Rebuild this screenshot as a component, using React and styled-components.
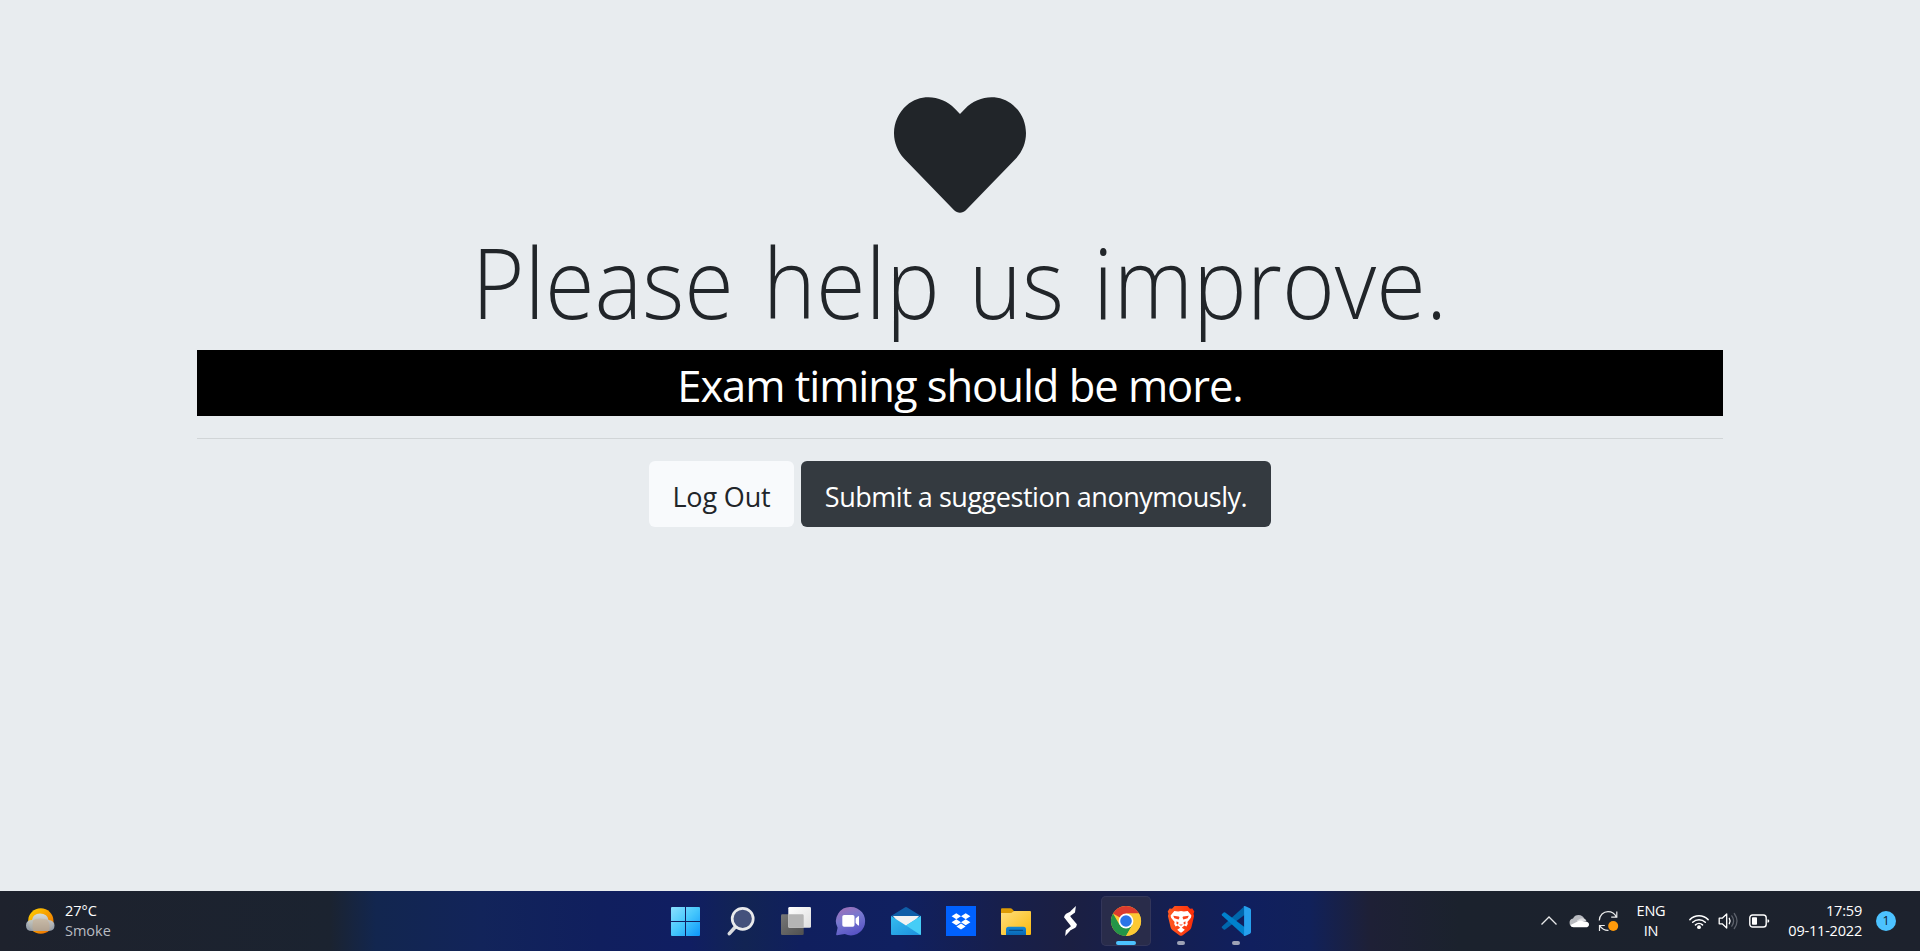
import React from 'react';
import styled, { createGlobalStyle } from 'styled-components';
import { FaHeart } from 'react-icons/fa';

const GlobalStyle = createGlobalStyle`
  *, *::before, *::after { box-sizing: border-box; }
  body {
    margin: 0;
    background: #e8ecef;
    color: #212529;
    font-family: 'Open Sans', 'Noto Sans', sans-serif;
    overflow: hidden;
  }
`;

const Screen = styled.div`
  height: 951px;
  display: flex;
  flex-direction: column;
`;

const Page = styled.main`
  flex: 1;
  min-height: 0;
  padding: 89px 197px 0;
  display: flex;
  flex-direction: column;
  align-items: center;
`;

const Heart = styled(FaHeart)`
  width: 132px;
  height: 132px;
  flex: none;
`;

const Title = styled.h1`
  margin: 7px 0 0;
  height: 122px;
  font-size: 97px;
  line-height: 107px;
  font-weight: 300;
  white-space: nowrap;
  word-spacing: 6px;
  transform: scaleX(0.93);
`;

const Banner = styled.p`
  margin: 0;
  width: 100%;
  height: 66px;
  background: #000;
  color: #fff;
  text-align: center;
  font-size: 43.5px;
  line-height: 71px;
  letter-spacing: -1.04px;
`;

const Rule = styled.hr`
  width: 100%;
  height: 1px;
  margin: 22px 0;
  border: 0;
  background: #d1d5d7;
`;

const Actions = styled.div`
  display: flex;
  gap: 7px;
`;

const Button = styled.button`
  width: ${(p) => p.$width};
  height: 66px;
  padding: 4px 0 0;
  border: 0;
  border-radius: 6px;
  background: ${(p) => (p.$dark ? '#343a40' : '#f8fafc')};
  color: ${(p) => (p.$dark ? '#fff' : '#212529')};
  font-family: inherit;
  font-size: 27px;
  letter-spacing: ${(p) => p.$spacing};
  white-space: nowrap;
`;

const Taskbar = styled.footer`
  height: 60px;
  flex: none;
  display: grid;
  grid-template-columns: 661px 600px 659px;
  align-items: center;
  color: #fff;
  background: linear-gradient(
    90deg,
    #1e222d 0, #1b2330 330px, #12264f 376px, #12245a 480px, #101f5e 600px,
    #101e62 690px, #122453 745px, #101f5e 800px, #102060 900px, #171f4c 1000px,
    #1b1f42 1070px, #131f55 1190px, #101f5e 1250px, #11215a 1310px, #1e2036 1370px, #1b222d 1460px, #1d222d 1920px
  );
`;

const Weather = styled.div`
  display: flex;
  align-items: center;
  gap: 9px;
  padding-left: 25px;
`;

const Lines = styled.div`
  display: flex;
  flex-direction: column;
  text-align: ${(p) => p.$align || 'left'};
  font-size: 14.5px;
  line-height: 20px;
  letter-spacing: ${(p) => (p.$align ? '-0.2px' : '0')};
  white-space: nowrap;
`;

const Muted = styled.span`
  color: #b9bcc2;
`;

const Apps = styled.nav`
  display: flex;
  gap: 5px;
`;

const AppTile = styled.div`
  width: 50px;
  height: 50px;
  border-radius: 5px;
  background: ${(p) => (p.$active ? '#292c4a' : 'transparent')};
  box-shadow: ${(p) => (p.$active ? 'inset 0 0 0 1px #33365a' : 'none')};
  svg { display: block; }
`;

const Tray = styled.div`
  display: flex;
  align-items: center;
  justify-content: flex-end;
  padding-right: 24px;
  svg { display: block; flex: none; }
`;

const TraySlot = styled.div`
  width: ${(p) => p.$width}px;
  margin-right: ${(p) => p.$gap}px;
  flex: none;
`;

const Count = styled.div`
  width: 20px;
  height: 20px;
  border-radius: 50%;
  background: #4cc2ff;
  color: #10202c;
  display: grid;
  place-items: center;
  font-size: 12.5px;
  line-height: 20px;
`;

const Icon = ({ children }) => (
  <svg width="50" height="50" viewBox="0 0 50 50">{children}</svg>
);

const Stops = ({ id, from, to, x2 = 1, y2 = 1 }) => (
  <linearGradient id={id} x1="0" y1="0" x2={x2} y2={y2}>
    <stop stopColor={from} />
    <stop offset="1" stopColor={to} />
  </linearGradient>
);

const StartIcon = () => (
  <Icon>
    <defs>
      <linearGradient id="win" gradientUnits="userSpaceOnUse" x1="10" y1="11" x2="39" y2="40">
        <stop stopColor="#8be0ff" />
        <stop offset=".5" stopColor="#45c6fc" />
        <stop offset="1" stopColor="#0c96fb" />
      </linearGradient>
    </defs>
    <path fill="url(#win)" d="M11 11h13v14H10V12a1 1 0 0 1 1-1zM25 11h13a1 1 0 0 1 1 1v13H25zM10 26h14v14H11a1 1 0 0 1-1-1zM25 26h14v13a1 1 0 0 1-1 1H25z" />
  </Icon>
);

const SearchIcon = () => (
  <Icon>
    <path d="M19.3 31l-6 6.6" stroke="#d9dbde" strokeWidth="3.6" strokeLinecap="round" />
    <circle cx="26.7" cy="22.8" r="10.5" fill="#44517c" stroke="#e9eaec" strokeWidth="2.7" />
  </Icon>
);

const TaskViewIcon = () => (
  <Icon>
    <defs>
      <Stops id="tv1" from="#ffffff" to="#dedede" />
      <Stops id="tv2" from="#777777" to="#505050" />
    </defs>
    <rect x="10" y="18.3" width="22.7" height="20.7" rx="1.3" fill="url(#tv2)" />
    <rect x="17.3" y="11" width="22.7" height="20.7" rx="1.3" fill="url(#tv1)" />
    <path d="M17.3 18.3h14.1a1.3 1.3 0 0 1 1.3 1.3v12.1H18.6a1.3 1.3 0 0 1-1.3-1.3z" fill="#b5b5b5" />
  </Icon>
);

const ChatIcon = () => (
  <Icon>
    <defs>
      <linearGradient id="chat" x1=".2" y1="0" x2=".6" y2="1">
        <stop stopColor="#a070b8" />
        <stop offset=".45" stopColor="#7678d0" />
        <stop offset="1" stopColor="#5752c4" />
      </linearGradient>
    </defs>
    <path d="M25 11a14.2 14.2 0 1 1-6.2 27l-7.8 1.200a.8.8 0 0 1-.8-1l1.400-6.500A14.200 14.200 0 0 1 25 11z" fill="url(#chat)" />
    <rect x="16.3" y="19" width="12.2" height="11.8" rx="1.8" fill="#fff" />
    <path d="M29.600 22.600l2.500-2.300q.9-.6.9.5v8.100q0 1.100-.9.5l-2.500-2.300z" fill="#fff" />
  </Icon>
);

const MailIcon = () => (
  <Icon>
    <defs><Stops id="mail" from="#35bdf0" to="#1c8fdc" /></defs>
    <path d="M10 20l13.8-8.5q1.200-.8 2.400 0L40 20v5H10z" fill="#0f5ea8" />
    <path d="M12 20h26l-10 12H22z" fill="#f2f2f2" />
    <path d="M10 20l15 9.5L40 20v18a1 1 0 0 1-1 1H11a1 1 0 0 1-1-1z" fill="url(#mail)" />
    <path d="M25 29.500L40 20v18q0 .6-.5.9z" fill="#45cdf6" />
  </Icon>
);

const DropboxIcon = () => (
  <Icon>
    <rect x="10" y="10" width="30" height="30" fill="#0061fe" />
    <path fill="#fff" d="M20.3 17.3l4.7 3-4.7 3-4.7-3zM29.7 17.3l4.7 3-4.7 3-4.7-3zM20.3 23.3l4.7 3-4.7 3-4.7-3zM29.7 23.3l4.7 3-4.7 3-4.7-3zM25 27.5l4.6 3-4.6 3-4.6-3z" />
  </Icon>
);

const FolderIcon = () => (
  <Icon>
    <defs>
      <Stops id="fold" from="#ffdf7d" to="#fbb90e" />
      <Stops id="foldb" from="#1289d8" to="#0966b4" x2={0} />
    </defs>
    <path d="M10 13.200q0-1 1-1h8.500q.8 0 1.400.6l2.200 2.400V22H10z" fill="#dd9b05" />
    <path d="M10 17h9.400q.9 0 1.600-.6l1.200-1q.5-.4 1.200-.4H39q1 0 1 1v22q0 1-1 1H11q-1 0-1-1z" fill="url(#fold)" />
    <path d="M15 39v-5.700q0-2.600 2.600-2.600h14.800q2.600 0 2.600 2.600V39z" fill="url(#foldb)" />
    <path d="M18.5 34.3h13" stroke="#064a86" strokeWidth="1.3" strokeLinecap="round" />
  </Icon>
);

const BoltIcon = () => (
  <Icon>
    <path fill="#fff" d="M29.900 10l-.9 6.600-4.800 3.300q-.8-2.200.2-4.600zM24.600 15.500q-1.500 3.600.3 5.800l6 6.900q-.2 2-1.600 3.600l-5.200 2.600q1.800-2.800.4-4.800L18 21.300q.6-2.200 2.100-3.500zM25 30.200q.6 2.600-1.100 4.800L19.200 40l.6-5.800z" />
  </Icon>
);

const ChromeIcon = () => (
  <Icon>
    <circle cx="25" cy="25" r="15" fill="#fcc934" />
    <path d="M25 25L12 17.5A15 15 0 0 1 38 17.5H25z" fill="#dc3b2e" />
    <path d="M12 17.5A15 15 0 0 0 25 40l6.5-11.2L25 25l-6.5 3.8z" fill="#249548" />
    <path d="M38 17.5A15 15 0 0 1 25 40l6.5-11.2A7.5 7.5 0 0 0 25 17.5z" fill="#fcc934" />
    <circle cx="25" cy="25" r="7.4" fill="#fff" />
    <circle cx="25" cy="25" r="5.8" fill="#2a74e8" />
    <rect x="15" y="45" width="20" height="4" rx="2" fill="#4cc2ff" />
  </Icon>
);

const BraveIcon = () => (
  <Icon>
    <defs><Stops id="brave" from="#ff5a22" to="#fb2d09" y2={0} /></defs>
    <path fill="url(#brave)" d="M18.6 10h12.8l2.6 2.8 2.4-.3 1.9 3.1-.8 2.2.6 2.1-2.7 11.4q-.5 1.9-2 3l-6.7 4.9q-1.7 1.2-3.4 0l-6.7-4.9q-1.5-1.1-2-3l-2.7-11.400.6-2.100-.8-2.200 1.900-3.100 2.400.3z" />
    <path fill="#fff" d="M18.3 15l3.8.6 2.9-.6 2.9.6 3.8-.6 3.7 4.600-.5 2.200-3.500 4.100.4 2.100-1.400 2.400-2-.8-2.600 2.100 2.700 1.700q.4.3 0 .7l-2.600 2.100q-.9.7-1.800 0l-2.600-2.100q-.4-.4 0-.7l2.700-1.700-2.600-2.100-2 .8-1.400-2.400.4-2.100-3.500-4.100-.5-2.200z" />
    <path fill="#fb431b" d="M17.200 19.800l5.600.8q.8.3.6 1.100l-.8 1.800-4.200-1.300zM32.800 19.800l-5.600.8q-.8.3-.6 1.100l.8 1.800 4.200-1.300zM20.600 25.200l2 1.200-.6 2.200-1.600-.9zM29.400 25.200l-2 1.200.6 2.200 1.600-.9zM23 28.400h4l-2 1.300z" />
    <rect x="21" y="45" width="8" height="4" rx="2" fill="#9ea2b5" />
  </Icon>
);

const CodeIcon = () => (
  <Icon>
    <path d="M33.1 10.4L11 30.5q-.7.7 0 1.4l1.7 1.6q.7.6 1.5 0L38 15.5z" fill="#0067ad" />
    <path d="M14.2 16.5q-.8-.6-1.5 0L11 18.1q-.7.7 0 1.4l22.1 20.1L38 34.5z" fill="#0081cc" />
    <path d="M32.2 39.3q1 .9 2.3.5l4.4-2.1q1.1-.5 1.1-1.7V14q0-1.200-1.100-1.700l-4.400-2.100q-1.300-.5-2.300.4 .9-.4.9 1v26.800q0 1.300-.9.900z" fill="#26a0ee" />
    <rect x="21" y="45" width="8" height="4" rx="2" fill="#9ea2b5" />
  </Icon>
);

const apps = [
  StartIcon, SearchIcon, TaskViewIcon, ChatIcon, MailIcon, DropboxIcon,
  FolderIcon, BoltIcon, ChromeIcon, BraveIcon, CodeIcon,
];

const WeatherIcon = () => (
  <svg width="31" height="32" viewBox="0 0 31 32">
    <defs>
      <Stops id="sun" from="#ffd400" to="#ee6500" />
      <Stops id="cloud" from="#d5dfe6" to="#98a0aa" x2={0} />
    </defs>
    <circle cx="15.800" cy="16" r="12.700" fill="url(#sun)" />
    <path d="M7 26q-6 0-6-5.500t6-5.500q1-6.500 8-6.500 7.500 0 8.500 6.500 6 .500 6 5.500T24 26z" fill="url(#cloud)" opacity=".93" />
    <path d="M8 26q-1-5 0-10.500 1.500-2 7-2t7.500 1.500q3 4 1.500 11z" fill="#c9a982" opacity=".45" />
  </svg>
);

const ChevronIcon = () => (
  <svg width="18" height="20" viewBox="0 0 18 20"><path d="M1.500 13.500L9 6l7.500 7.500" fill="none" stroke="#e8e9ea" strokeWidth="1.300" /></svg>
);

const CloudIcon = () => (
  <svg width="20" height="20" viewBox="0 0 20 20">
    <path d="M4.500 16a4.300 4.300 0 0 1-.5-8.500 6.200 6.200 0 0 1 11.200.1L17 9z" fill="#b9bbc0" />
    <path d="M8 9.500l3-1.800q2.500-1.200 4.700.3L17.500 10 9 12z" fill="#dcdde0" />
    <path d="M1.500 14l8.700-4.200q2.300-.8 3.800.6h2.200q3.800.3 3.800 3t-3.400 2.900H4.500Q2 16.200 1.500 14z" fill="#fff" />
  </svg>
);

const SyncIcon = () => (
  <svg width="22" height="22" viewBox="0 0 22 22" fill="none" stroke="#eceded" strokeWidth="1.200">
    <path d="M1.300 10.500C1.500 5 5.500 1.600 10 1.600c3.800 0 6.800 2 8.300 5.300M18.800 1.500v5.700h-5.600M1.500 21v-5.500h5.300M1.800 15.800C4 19 6.500 20.500 10.500 20.300" />
    <circle cx="15.200" cy="16" r="5" fill="#ff9a0a" stroke="none" />
  </svg>
);

const WifiIcon = () => (
  <svg width="20" height="18" viewBox="0 0 20 18" fill="none" stroke="#fff" strokeWidth="1.500" strokeLinecap="round">
    <path d="M.9 7.600a12.900 12.900 0 0 1 18.200 0M3.700 10.200a9 9 0 0 1 12.600 0M6.500 12.900a5 5 0 0 1 7 0" />
    <circle cx="10" cy="15.200" r="1.900" fill="#fff" stroke="none" />
  </svg>
);

const SpeakerIcon = () => (
  <svg width="22" height="20" viewBox="0 0 22 20" fill="none" stroke="#fff" strokeWidth="1.300" strokeLinecap="round" strokeLinejoin="round">
    <path d="M1.200 7.200h3L8.700 3v14l-4.500-4.200h-3zM11.300 7.300q1.600 2.700 0 5.400" />
    <path d="M13.800 4.900q3.600 5.100 0 10.200M16.300 2.500q5.400 7.500 0 15" stroke="#5c616b" />
  </svg>
);

const BatteryIcon = () => (
  <svg width="21" height="16" viewBox="0 0 21 16">
    <rect x=".8" y="2" width="16.400" height="12" rx="2.800" fill="none" stroke="#fff" strokeWidth="1.400" />
    <rect x="3" y="4.200" width="5" height="7.600" rx=".8" fill="#fff" />
    <path d="M18.500 6.200q1.800.3 1.800 1.800t-1.800 1.800z" fill="#fff" />
  </svg>
);

export default function App() {
  return (
    <Screen>
      <GlobalStyle />
      <Page>
        <Heart />
        <Title>Please help us improve.</Title>
        <Banner>Exam timing should be more.</Banner>
        <Rule />
        <Actions>
          <Button $width="145px" $spacing="-0.15px">Log Out</Button>
          <Button $dark $width="470px" $spacing="-0.47px">Submit a suggestion anonymously.</Button>
        </Actions>
      </Page>
      <Taskbar>
        <Weather>
          <WeatherIcon />
          <Lines><span>27°C</span><Muted>Smoke</Muted></Lines>
        </Weather>
        <Apps>
          {apps.map((Glyph, i) => (
            <AppTile key={i} $active={Glyph === ChromeIcon}><Glyph /></AppTile>
          ))}
        </Apps>
        <Tray>
          <TraySlot $width={18} $gap={11}><ChevronIcon /></TraySlot>
          <TraySlot $width={20} $gap={9}><CloudIcon /></TraySlot>
          <TraySlot $width={22} $gap={16}><SyncIcon /></TraySlot>
          <TraySlot $width={30} $gap={23}><Lines $align="center"><span>ENG</span><span>IN</span></Lines></TraySlot>
          <TraySlot $width={20} $gap={9}><WifiIcon /></TraySlot>
          <TraySlot $width={22} $gap={9}><SpeakerIcon /></TraySlot>
          <TraySlot $width={21} $gap={18}><BatteryIcon /></TraySlot>
          <TraySlot $width={74} $gap={14}><Lines $align="right"><span>17:59</span><span>09-11-2022</span></Lines></TraySlot>
          <Count>1</Count>
        </Tray>
      </Taskbar>
    </Screen>
  );
}
